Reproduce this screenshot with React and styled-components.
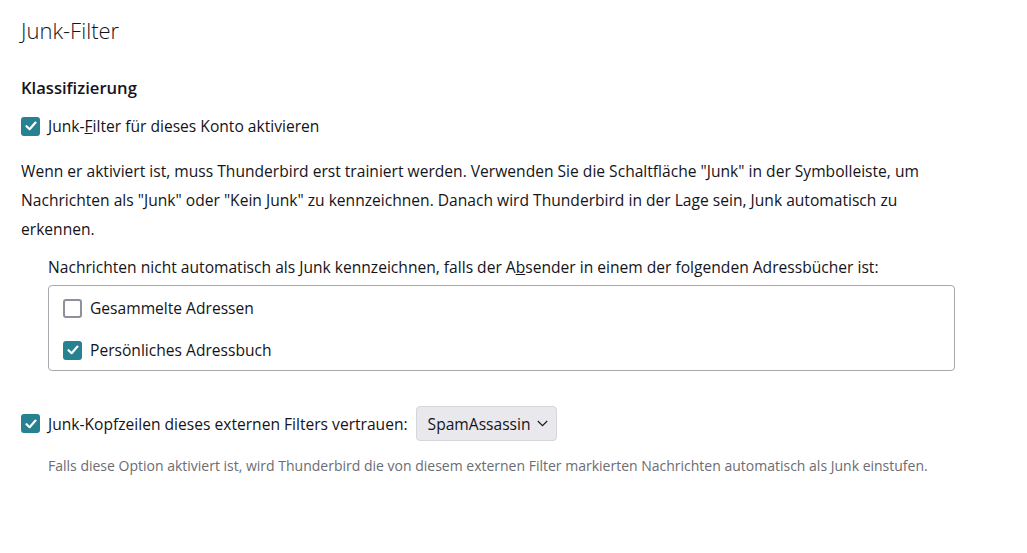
import React from "react";
import styled, { createGlobalStyle } from "styled-components";

const GlobalStyle = createGlobalStyle`
    html, body {
        margin: 0;
        padding: 0;
        background: #fff;
    }
    body {
        font-family: "Open Sans", "Noto Sans", sans-serif;
        color: #15141a;
    }
`;

function CheckIcon() {
    return (
        <svg width="12" height="10" viewBox="0 0 12 10" fill="none">
            <path
                d="M1.5 5.2 L4.6 8.2 L10.5 1.6"
                stroke="#fff"
                strokeWidth="2.2"
                strokeLinecap="round"
                strokeLinejoin="round"
            />
        </svg>
    );
}

function Checkbox({ checked, children }) {
    return (
        <CheckRow>
            <Box checked={checked}>{checked && <CheckIcon />}</Box>
            <CheckLabel>{children}</CheckLabel>
        </CheckRow>
    );
}

export default function App() {
    return (
        <>
            <GlobalStyle />
            <Page>
                <Title>Junk-Filter</Title>
                <SectionHeading>Klassifizierung</SectionHeading>
                <Checkbox checked>
                    Junk-<u>F</u>ilter für dieses Konto aktivieren
                </Checkbox>
                <Paragraph>
                    Wenn er aktiviert ist, muss Thunderbird erst trainiert
                    werden. Verwenden Sie die Schaltfläche "Junk" in der
                    Symbolleiste, um Nachrichten als "Junk" oder "Kein Junk" zu
                    kennzeichnen. Danach wird Thunderbird in der Lage sein, Junk
                    automatisch zu erkennen.
                </Paragraph>
                <Indented>
                    <ListCaption>
                        Nachrichten nicht automatisch als Junk kennzeichnen,
                        falls der A<u>b</u>sender in einem der folgenden
                        Adressbücher ist:
                    </ListCaption>
                    <ListBox>
                        <Checkbox>Gesammelte Adressen</Checkbox>
                        <Checkbox checked>Persönliches Adressbuch</Checkbox>
                    </ListBox>
                </Indented>
                <FilterRow>
                    <Checkbox checked>
                        <u>J</u>unk-Kopfzeilen dieses externen Filters vertrauen:
                    </Checkbox>
                    <Dropdown>
                        SpamAssassin
                        <svg width="11" height="7" viewBox="0 0 11 7" fill="none">
                            <path
                                d="M0.8 1 L5.5 5.7 L10.2 1"
                                stroke="#15141a"
                                strokeWidth="1.1"
                            />
                        </svg>
                    </Dropdown>
                </FilterRow>
                <Hint>
                    Falls diese Option aktiviert ist, wird Thunderbird die von
                    diesem externen Filter markierten Nachrichten automatisch als
                    Junk einstufen.
                </Hint>
            </Page>
        </>
    );
}

const Page = styled.div`
    width: 934px;
    padding: 14px 0 40px 21px;
    font-size: 15.6px;
`;
const Title = styled.h1`
    margin: 0 0 30px;
    font-size: 22px;
    font-weight: 300;
    line-height: 32px;
`;
const SectionHeading = styled.h2`
    margin: 0 0 12px;
    font-size: 16.6px;
    font-weight: 600;
    line-height: 24px;
`;
const CheckRow = styled.label`
    display: flex;
    align-items: center;
    gap: 8px;
    height: 28px;
    font-size: 15.6px;
`;
const Box = styled.span`
    width: 19px;
    height: 19px;
    box-sizing: border-box;
    border-radius: 3px;
    display: flex;
    align-items: center;
    justify-content: center;
    flex-shrink: 0;
    background: ${(p) => (p.checked ? "#268190" : "#fff")};
    border: 2px solid ${(p) => (p.checked ? "#268190" : "#8f8f9d")};
`;
const CheckLabel = styled.span`
    line-height: 20px;
`;
const Paragraph = styled.p`
    margin: 17px 0 13px;
    font-size: 15.6px;
    line-height: 29px;
`;
const Indented = styled.div`
    padding-left: 27px;
`;
const ListCaption = styled.div`
    font-size: 15.6px;
    line-height: 20px;
    margin-bottom: 8px;
`;
const ListBox = styled.div`
    border: 1px solid #a8a8ae;
    border-radius: 4px;
    padding: 8px 14px 6px;
    display: flex;
    flex-direction: column;
    gap: 14px;
`;
const FilterRow = styled.div`
    display: flex;
    align-items: center;
    gap: 8px;
    margin-top: 35px;
`;
const Dropdown = styled.button`
    display: flex;
    align-items: center;
    gap: 6px;
    height: 35px;
    padding: 0 8px 0 11px;
    background: #e9e9ed;
    border: 1px solid #d5d5da;
    border-radius: 4px;
    font-family: inherit;
    font-size: 15.6px;
    color: #15141a;
`;
const Hint = styled.p`
    margin: 16px 0 0 27px;
    font-size: 14px;
    line-height: 18px;
    color: #6c6c73;
`;
